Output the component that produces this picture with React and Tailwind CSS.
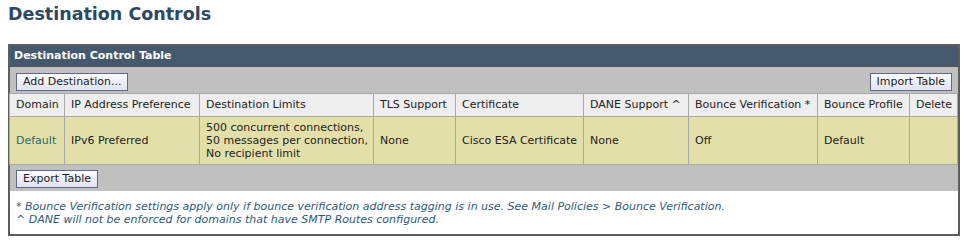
const headers = [
  { name: 'Domain', w: 'w-[55px]' },
  { name: 'IP Address Preference', w: 'w-[135px]' },
  { name: 'Destination Limits', w: 'w-[174px]' },
  { name: 'TLS Support', w: 'w-[82px]' },
  { name: 'Certificate', w: 'w-[128px]' },
  { name: 'DANE Support ^', w: 'w-[105px]' },
  { name: 'Bounce Verification *', w: 'w-[129px]' },
  { name: 'Bounce Profile', w: 'w-[92px]' },
  { name: 'Delete', w: '' }
]

function Button({ children }) {
  return (
    <button className="h-[18px] px-[6px] border border-[#5d6790] bg-gradient-to-b from-[#fbfbff] to-[#e2e2f0] text-[11px] leading-[16px] text-[#222]">
      {children}
    </button>
  )
}

export default function App() {
  const cell = 'border border-[#a8a8a8] px-[6px] text-left align-middle whitespace-nowrap overflow-hidden'

  return (
    <div className="w-[970px] h-[245px] bg-white text-[11px] text-[#222] font-['DejaVu_Sans','Verdana',sans-serif]">
      <h1 className="px-[8px] pt-[2px] text-[17.5px] leading-[24px] font-bold text-[#2e4864]">
        Destination Controls
      </h1>

      <div className="mt-[18px] ml-[8px] w-[952px] border-2 border-[#5e5e5e]">
        <div className="h-[20px] bg-[#44586e] px-[4px] text-white font-bold leading-[20px]">
          Destination Control Table
        </div>
        <div className="flex justify-between items-start bg-[#c0c0c0] border-t border-[#555] pt-[6px] pb-[3px] px-[6px] h-[27px]">
          <Button>Add Destination...</Button>
          <Button>Import Table</Button>
        </div>

        <table className="table-fixed border-collapse -ml-[1px]" style={{ width: 'calc(100% + 1px)' }}>
          <thead>
            <tr className="bg-[#eeeeee] h-[23px]">
              {headers.map((h) => (
                <th key={h.name} className={`${cell} ${h.w} font-normal`}>
                  {h.name}
                </th>
              ))}
            </tr>
          </thead>
          <tbody>
            <tr className="bg-[#e2e0a8] h-[48px] leading-[13px]">
              <td className={`${cell} text-[#2b6a6a]`}>Default</td>
              <td className={cell}>IPv6 Preferred</td>
              <td className={cell}>
                500 concurrent connections,<br />
                50 messages per connection,<br />
                No recipient limit
              </td>
              <td className={cell}>None</td>
              <td className={cell}>Cisco ESA Certificate</td>
              <td className={cell}>None</td>
              <td className={cell}>Off</td>
              <td className={cell}>Default</td>
              <td className={cell}></td>
            </tr>
          </tbody>
        </table>

        <div className="bg-[#c0c0c0] h-[26px] pt-[5px] px-[6px]">
          <Button>Export Table</Button>
        </div>

        <div className="bg-white px-[6px] pt-[9px] pb-[8px] italic leading-[13px] text-[#2b5a7e]">
          <div>* Bounce Verification settings apply only if bounce verification address tagging is in use. See Mail Policies &gt; Bounce Verification.</div>
          <div>^ DANE will not be enforced for domains that have SMTP Routes configured.</div>
        </div>
      </div>
    </div>
  )
}
